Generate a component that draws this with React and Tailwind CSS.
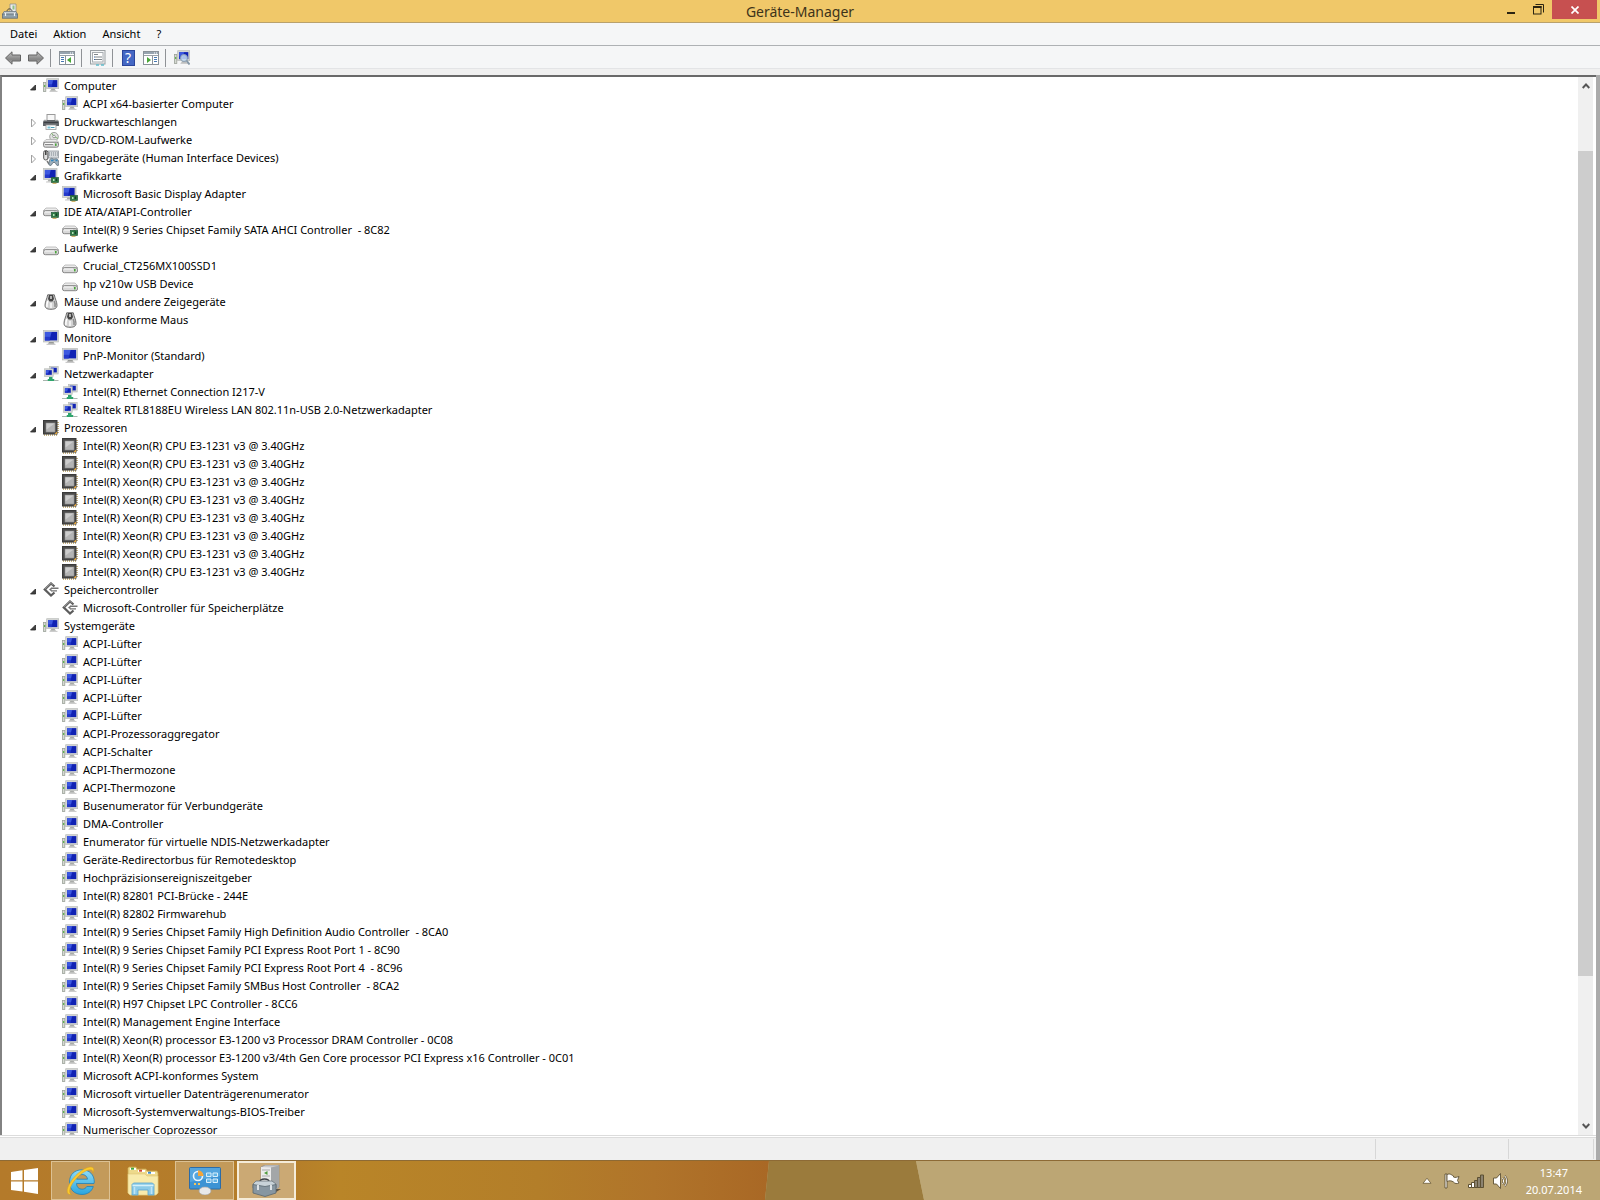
import React from "react";

const Screen = ({ x, y, w, h }) => (
  <g>
    <rect x={x} y={y} width={w} height={h} fill="#d3d5d4" stroke="#b4b7b4" strokeWidth="0.6" />
    <rect x={x + 1.4} y={y + 1.4} width={w - 2.8} height={h - 3} fill="#1022b4" />
    <path d={`M${x + 1.4} ${y + 1.4}h${(w - 2.8) * 0.55}l-${w * 0.15} ${h - 3}h-${(w - 2.8) * 0.55 - w * 0.15}z`} fill="#3c58e0" />
    <path d={`M${x + 1.4} ${y + h * 0.55}h${w * 0.35}v${h * 0.45 - 1.6}h-${w * 0.35}z`} fill="#1a2cc0" opacity="0.7" />
  </g>
);

const Board = ({ x, y }) => (
  <g>
    <rect x={x} y={y} width="7" height="5" fill="#2f7b45" stroke="#23593a" strokeWidth="0.7" />
    <rect x={x + 1.5} y={y + 1.5} width="1.5" height="2" fill="#b6dfb8" />
    <rect x={x + 4.2} y={y + 1} width="1.4" height="2.5" fill="#173d29" />
    <path d={`M${x + 1} ${y + 5.8}h4`} stroke="#c6a34a" />
  </g>
);

const Drive = ({ y = 6 }) => (
  <g>
    <path d={`M3 ${y - 1}h10l3 3H0z`} fill="#ececec" stroke="#aaa" strokeWidth="0.7" />
    <rect x="0.5" y={y + 1.7} width="15" height="5" rx="1.8" fill="#d9d9d9" stroke="#858585" />
    <path d={`M2 ${y + 3}h9`} stroke="#fafafa" />
    <rect x="12" y={y + 3} width="1.6" height="2.4" fill="#4aa53a" />
  </g>
);

const shapes = {
  system: (
    <>
      <rect x="0.5" y="4.5" width="2.3" height="9" fill="#d5d9d2" stroke="#9ba198" strokeWidth="0.8" />
      <rect x="1" y="7" width="1.3" height="2" fill="#63b252" />
      <Screen x={3.7} y={0.7} w={12} h={10} />
      <path d="M8.5 10.8h3l1.5 2h-6z" fill="#a9aba9" />
      <path d="M6.5 13.4h8" stroke="#c7c7c7" />
    </>
  ),
  printer: (
    <>
      <rect x="4" y="0.5" width="8" height="6" fill="#f7f7f7" stroke="#9a9a9a" />
      <path d="M1 6h14l1 2v4H0V8z" fill="#62656a" />
      <path d="M1 5.8h3v1H1zM12 5.8h3v1h-3z" fill="#b0b0b0" />
      <path d="M1 8.5h14" stroke="#3c3f43" />
      <rect x="3" y="11" width="10" height="4.5" fill="#fff" stroke="#999" strokeWidth="0.8" />
      <path d="M4.5 12.5h3v2h-3z" fill="#7cc5d8" />
      <path d="M8 13.5h3.5" stroke="#4a9db8" />
    </>
  ),
  dvd: (
    <>
      <circle cx="11" cy="4.7" r="4.3" fill="#e2e4e2" stroke="#8d8f8d" strokeWidth="0.8" />
      <path d="M11 4.5L8.5 1M11 4.5l4 2" stroke="#7fb66e" />
      <circle cx="11" cy="4.5" r="1.3" fill="#fff" stroke="#777" strokeWidth="0.7" />
      <Drive y={8.5} />
      <path d="M2 12.5h8" stroke="#8a8a8a" />
    </>
  ),
  hid: (
    <>
      <rect x="5" y="1" width="10.5" height="7" fill="#d5d9dc" stroke="#9399a0" strokeWidth="0.8" />
      <path d="M6 3h9M6 5h9" stroke="#7f868f" strokeDasharray="1 1" />
      <rect x="0.7" y="0.5" width="4.2" height="9.5" rx="2" fill="#e1e1e1" stroke="#555" />
      <path d="M2.8 1v4" stroke="#333" strokeWidth="1.4" />
      <path d="M4 11l2 3" stroke="#777" strokeWidth="1.4" />
      <path d="M6 15c0-6 2-8 4-6h2c3-1 4 2 4 6l-2 .5-2-3h-2l-2 3z" fill="#9eb0bd" stroke="#5e6e7a" strokeWidth="0.8" />
      <path d="M8 10.5h2.5M12.5 10.5h2" stroke="#2f84bd" strokeWidth="1.6" />
    </>
  ),
  display: (
    <>
      <Screen x={0.5} y={0.5} w={13.5} h={11} />
      <path d="M5.5 11.5h4l1 2h-6z" fill="#a9aba9" />
      <path d="M3 14h8" stroke="#c7c7c7" />
      <Board x={8.5} y={9.5} />
    </>
  ),
  ide: (
    <>
      <Drive y={5} />
      <Board x={8.5} y={8.5} />
    </>
  ),
  drive: <Drive y={8} />,
  mouse: (
    <>
      <path d="M4.700 .800h6.600c.700 4 2.700 7 2.700 10.500 0 2.500-1.500 4-6 4s-6-1.500-6-4C2 7.800 4 4.800 4.700.800z" fill="#d2d2d2" stroke="#5f5f5f" strokeWidth="0.900" />
      <path d="M4.800 7c-1 2.500-1.500 4-.800 6" stroke="#fff" strokeWidth="1.600" fill="none" />
      <path d="M11.200 7c1 2.500 1.500 4 .800 6" stroke="#8c8c8c" strokeWidth="1.600" fill="none" />
      <path d="M6 1h4l1 4-1.500 2.500h-3L5 5z" fill="#454545" />
      <path d="M8 2v3" stroke="#f2f2f2" strokeWidth="1.300" />
      <path d="M8 9v5" stroke="#f0f0f0" strokeWidth="2" />
    </>
  ),
  monitor: (
    <>
      <Screen x={0.5} y={0.5} w={15} h={11.5} />
      <path d="M6 12h4.500l1 1.800H5z" fill="#989a98" />
      <path d="M3.500 14.300h9" stroke="#bdbdbd" />
    </>
  ),
  network: (
    <>
      <Screen x={6.5} y={0.4} w={8.7} h={7.6} />
      <Screen x={1.5} y={2.8} w={8.7} h={7.6} />
      <path d="M6 11h3.500v2H11l1 2H4l1-2h1z" fill="#2fa56d" />
      <path d="M0 14.500h4.500M11 14.500h4.500" stroke="#a9b5ae" />
    </>
  ),
  cpu: (
    <>
      <path d="M1 15h13M15 2v12" stroke="#b59a5a" strokeWidth="1.600" strokeDasharray="1 1" />
      <rect x="0.500" y="0.500" width="13.500" height="13.500" fill="#4b4b4b" stroke="#3a3a3a" />
      <rect x="3" y="3" width="9" height="9" fill="#b4b4b4" stroke="#8f8f8f" strokeWidth="0.600" />
      <path d="M3.500 3.500h8l-8 6z" fill="#cdcdcd" />
      <path d="M11.500 14h2.500v-2.500z" fill="#e5a53c" />
    </>
  ),
  storage: (
    <>
      <path d="M11.500 4.500L8 1.500 1.800 7.500 8 13.500l3.500-3" fill="none" stroke="#5c5c5c" strokeWidth="2.300" />
      <path d="M2 7L8 1.200l2 2" fill="none" stroke="#9a9a9a" strokeWidth="0.900" />
      <path d="M8 6.300h7.500M8 8.900h6" stroke="#747474" strokeWidth="1.400" />
      <path d="M6 7.600l2.500-2v4z" fill="#747474" />
    </>
  ),
};

const Icon = ({ name }) => (
  <svg viewBox="0 0 16 16" className="h-4 w-4 shrink-0" aria-hidden="true">
    {shapes[name]}
  </svg>
);

const cpu = "Intel(R) Xeon(R) CPU E3-1231 v3 @ 3.40GHz";

const tree = [
  { icon: "system", label: "Computer", items: ["ACPI x64-basierter Computer"] },
  { icon: "printer", label: "Druckwarteschlangen" },
  { icon: "dvd", label: "DVD/CD-ROM-Laufwerke" },
  { icon: "hid", label: "Eingabegeräte (Human Interface Devices)" },
  { icon: "display", label: "Grafikkarte", items: ["Microsoft Basic Display Adapter"] },
  { icon: "ide", label: "IDE ATA/ATAPI-Controller", items: ["Intel(R) 9 Series Chipset Family SATA AHCI Controller  - 8C82"] },
  { icon: "drive", label: "Laufwerke", items: ["Crucial_CT256MX100SSD1", "hp v210w USB Device"] },
  { icon: "mouse", label: "Mäuse und andere Zeigegeräte", items: ["HID-konforme Maus"] },
  { icon: "monitor", label: "Monitore", items: ["PnP-Monitor (Standard)"] },
  {
    icon: "network",
    label: "Netzwerkadapter",
    items: ["Intel(R) Ethernet Connection I217-V", "Realtek RTL8188EU Wireless LAN 802.11n-USB 2.0-Netzwerkadapter"],
  },
  { icon: "cpu", label: "Prozessoren", items: [cpu, cpu, cpu, cpu, cpu, cpu, cpu, cpu] },
  { icon: "storage", label: "Speichercontroller", items: ["Microsoft-Controller für Speicherplätze"] },
  {
    icon: "system",
    label: "Systemgeräte",
    items: [
      "ACPI-Lüfter",
      "ACPI-Lüfter",
      "ACPI-Lüfter",
      "ACPI-Lüfter",
      "ACPI-Lüfter",
      "ACPI-Prozessoraggregator",
      "ACPI-Schalter",
      "ACPI-Thermozone",
      "ACPI-Thermozone",
      "Busenumerator für Verbundgeräte",
      "DMA-Controller",
      "Enumerator für virtuelle NDIS-Netzwerkadapter",
      "Geräte-Redirectorbus für Remotedesktop",
      "Hochpräzisionsereigniszeitgeber",
      "Intel(R) 82801 PCI-Brücke - 244E",
      "Intel(R) 82802 Firmwarehub",
      "Intel(R) 9 Series Chipset Family High Definition Audio Controller  - 8CA0",
      "Intel(R) 9 Series Chipset Family PCI Express Root Port 1 - 8C90",
      "Intel(R) 9 Series Chipset Family PCI Express Root Port 4  - 8C96",
      "Intel(R) 9 Series Chipset Family SMBus Host Controller  - 8CA2",
      "Intel(R) H97 Chipset LPC Controller - 8CC6",
      "Intel(R) Management Engine Interface",
      "Intel(R) Xeon(R) processor E3-1200 v3 Processor DRAM Controller - 0C08",
      "Intel(R) Xeon(R) processor E3-1200 v3/4th Gen Core processor PCI Express x16 Controller - 0C01",
      "Microsoft ACPI-konformes System",
      "Microsoft virtueller Datenträgerenumerator",
      "Microsoft-Systemverwaltungs-BIOS-Treiber",
      "Numerischer Coprozessor",
    ],
  },
];

const Category = ({ icon, label, items }) => (
  <li>
    <div className="flex h-[18px] items-center pl-7">
      <button type="button" aria-label={label} aria-expanded={Boolean(items)} className="mr-1 flex h-3 w-[9px] items-center">
        <svg viewBox="0 0 9 12" className="h-3 w-[9px]">
          {items ? (
            <path d="M.500 10L5.500 5v5z" fill="#404040" stroke="#262626" strokeWidth="0.800" />
          ) : (
            <path d="M1.500 3v8L5.500 7z" fill="#fff" stroke="#a0a0a0" />
          )}
        </svg>
      </button>
      <Icon name={icon} />
      <span className="ml-[5px] whitespace-pre">{label}</span>
    </div>
    {items && (
      <ul>
        {items.map((item, i) => (
          <li key={i} className="flex h-[18px] items-center pl-[60px]">
            <Icon name={icon} />
            <span className="ml-[5px] whitespace-pre">{item}</span>
          </li>
        ))}
      </ul>
    )}
  </li>
);

const Arrow = ({ flip }) => (
  <svg viewBox="0 0 16 14" className="h-[14px] w-4">
    <defs>
      <linearGradient id="arrowFill" x1="0" y1="0" x2="0" y2="1">
        <stop offset="0" stopColor="#c4c4c4" />
        <stop offset="0.600" stopColor="#858585" />
        <stop offset="1" stopColor="#b5b5b5" />
      </linearGradient>
    </defs>
    <path
      d={flip ? "M15.500 7L9 .800V4H.500v6H9v3.200z" : "M.500 7L7 .800V4h8.500v6H7v3.200z"}
      fill="url(#arrowFill)"
      stroke="#636363"
    />
  </svg>
);

const PanelIcon = ({ right }) => (
  <svg viewBox="0 0 16 14" className="h-[14px] w-4">
    <rect x="0.500" y="0.500" width="15" height="13" fill="#fff" stroke="#8a9299" />
    <path d="M1 2h14" stroke="#97a4b0" strokeWidth="2" />
    <path d="M11 2h1M13 2h1" stroke="#fff" />
    <path d="M1 4.500h14" stroke="#9aa1a8" />
    {right ? (
      <>
        <path d="M9.500 5v8.500" stroke="#8a9299" />
        <path d="M11 6.500h3M11 8.500h3M11 10.500h3" stroke="#4779b3" />
        <path d="M4 6v6l4-3z" fill="#48a637" />
      </>
    ) : (
      <>
        <path d="M6.500 5v8.500" stroke="#8a9299" />
        <path d="M2 6.500h3M2 8.500h3M2 10.500h3" stroke="#4779b3" />
        <path d="M12 6v6L8 9z" fill="#48a637" />
      </>
    )}
  </svg>
);

const Divider = () => <span className="h-[18px] w-px bg-[#8f9296]" />;

const ToolButton = ({ label, children }) => (
  <button type="button" aria-label={label} className="flex h-5 w-4 items-center justify-center">
    {children}
  </button>
);

const TitleBar = () => (
  <header className="flex h-[23px] items-start border-b border-[#b9a16c] bg-[#f0c869]">
    <div className="flex w-[160px] pt-[3px] pl-0.5">
      <svg viewBox="0 0 16 16" className="h-4 w-4">
        <path d="M8 1h6v10H8z" fill="#ececec" stroke="#8d8f8a" strokeWidth="0.800" />
        <path d="M10.500 2.500h2v4h-2z" fill="#8fc084" />
        <path d="M5 8.500C5 5 10 5 10 8.500" fill="none" stroke="#444" />
        <path d="M2 8.500h12l1.500 3H.500z" fill="#c4cdd3" stroke="#6d7880" strokeWidth="0.800" />
        <rect x="0.500" y="11" width="15" height="4.200" fill="#8fa0ab" stroke="#5f6c75" strokeWidth="0.800" />
        <path d="M3.500 10v3M12.500 10v3" stroke="#eef2f4" strokeWidth="1.200" />
      </svg>
    </div>
    <h1 className="flex-1 text-center text-[14px] leading-[23px] text-[#3d331a]">Geräte-Manager</h1>
    <div className="flex w-[160px] justify-end pr-[3px]">
      <button type="button" aria-label="Minimieren" className="flex h-[19px] w-7 items-center justify-center">
        <svg viewBox="0 0 10 10" className="h-2.5 w-2.5">
          <path d="M1 8h8" stroke="#2b2412" strokeWidth="2" />
        </svg>
      </button>
      <button type="button" aria-label="Verkleinern" className="mr-px flex h-[19px] w-[26px] items-center justify-center">
        <svg viewBox="0 0 11 11" className="h-[11px] w-[11px]">
          <path d="M2.500 .500h8v8" fill="none" stroke="#2b2412" />
          <rect x="0.500" y="2.500" width="7.500" height="7.500" fill="none" stroke="#2b2412" />
          <path d="M0 3h8.500" stroke="#2b2412" strokeWidth="2" />
        </svg>
      </button>
      <button type="button" aria-label="Schließen" className="flex h-[19px] w-[45px] items-center justify-center bg-[#c75050]">
        <svg viewBox="0 0 8 8" className="h-2 w-2">
          <path d="M.500 .500l7 7M7.500 .500l-7 7" stroke="#fff" strokeWidth="1.700" />
        </svg>
      </button>
    </div>
  </header>
);

const MenuBar = () => (
  <nav className="flex h-[23px] items-center gap-4 border-b border-[#aeb1b4] bg-[#f5f6f7] pl-2.5">
    {["Datei", "Aktion", "Ansicht", "?"].map((m) => (
      <button key={m} type="button">
        {m}
      </button>
    ))}
  </nav>
);

const ToolBar = () => (
  <div className="flex h-[23px] items-center border-b border-[#e3e4e6] bg-[#f5f6f7] pt-0.5 pl-[5px]">
    <div className="flex gap-[7px]">
      <ToolButton label="Zurück"><Arrow /></ToolButton>
      <ToolButton label="Vorwärts"><Arrow flip /></ToolButton>
    </div>
    <div className="ml-1.5 flex items-center gap-2">
      <Divider />
      <ToolButton label="Konsolenstruktur"><PanelIcon /></ToolButton>
    </div>
    <div className="ml-1.5 flex items-center gap-2">
      <Divider />
      <ToolButton label="Eigenschaften">
        <svg viewBox="0 0 16 16" className="h-4 w-4">
          <rect x="0.500" y="0.500" width="14.500" height="13.500" fill="#f3f5f6" stroke="#9a9fa3" />
          <rect x="2.500" y="2.500" width="10.500" height="9.500" fill="#fff" stroke="#a7acb0" />
          <path d="M4 4.500h4M5 7h7M5 9.500h7" stroke="#7f868c" />
          <path d="M4 7h1M4 9.500h1" stroke="#3465a4" />
          <path d="M6 15h3M11 15h3" stroke="#5fbccb" strokeWidth="1.500" />
        </svg>
      </ToolButton>
    </div>
    <div className="ml-1.5 flex items-center gap-[7px]">
      <Divider />
      <ToolButton label="Hilfe">
        <span className="flex h-4 w-[13px] items-center justify-center border border-[#2b459b] bg-[#4467c4] text-[14px] leading-4 text-white">?</span>
      </ToolButton>
      <ToolButton label="Aktionsbereich"><PanelIcon right /></ToolButton>
    </div>
    <div className="ml-1.5 flex items-center gap-2">
      <Divider />
      <ToolButton label="Nach geänderter Hardware suchen">
        <svg viewBox="0 0 16 16" className="h-4 w-4">
          {shapes.system}
          <circle cx="10" cy="8" r="3.500" fill="#c5ddf3" fillOpacity="0.850" stroke="#8b9fb3" />
          <path d="M12.500 10.500l3 4" stroke="#8698a8" strokeWidth="2" />
        </svg>
      </ToolButton>
    </div>
  </div>
);

const ScrollBar = () => (
  <div className="flex w-[15px] shrink-0 flex-col bg-[#f0f0f0]">
    <button type="button" aria-label="Nach oben" className="flex h-[18px] items-center justify-center">
      <svg viewBox="0 0 8 6" className="h-1.5 w-2">
        <path d="M.700 5L4 1.500 7.300 5" fill="none" stroke="#555" strokeWidth="1.900" />
      </svg>
    </button>
    <div className="grow-[56]" />
    <div className="grow-[825] bg-[#cdcdcd]" />
    <div className="grow-[141]" />
    <button type="button" aria-label="Nach unten" className="flex h-[18px] items-center justify-center">
      <svg viewBox="0 0 8 6" className="h-1.5 w-2">
        <path d="M.700 1L4 4.500 7.300 1" fill="none" stroke="#555" strokeWidth="1.900" />
      </svg>
    </button>
  </div>
);

const StatusBar = () => (
  <footer className="flex h-[22px] shrink-0 bg-[#f0f0f0] py-px pr-0.5">
    <div className="flex-1 border-r border-[#d7d7d7]" />
    <div className="w-[133px] border-r border-[#d7d7d7]" />
    <div className="w-[85px] border-r border-[#d7d7d7]" />
  </footer>
);

const TaskButton = ({ label, active, children }) => (
  <button
    type="button"
    aria-label={label}
    className={
      active
        ? "flex h-[39px] w-[59px] items-center justify-center border-2 border-[#f5ecd9] bg-[#cba974]"
        : "flex h-[39px] w-[59px] items-center justify-center border border-[#dcc193] bg-[#c39a5a]"
    }
  >
    {children}
  </button>
);

const TaskBar = () => (
  <div className="relative flex h-10 shrink-0 items-stretch border-t border-[#8d6a35] bg-[#bca674]">
    <svg viewBox="0 0 1600 39" preserveAspectRatio="none" className="absolute inset-0 h-full w-full" aria-hidden="true">
      <defs>
        <linearGradient id="wall" x1="0" x2="1">
          <stop offset="0" stopColor="#b47a2a" />
          <stop offset="0.380" stopColor="#b57e2a" />
          <stop offset="0.440" stopColor="#b98528" />
          <stop offset="0.700" stopColor="#b37e29" />
          <stop offset="0.850" stopColor="#b0742a" />
          <stop offset="1" stopColor="#a96825" />
        </linearGradient>
      </defs>
      <path d="M0 0h769l-4 39H0z" fill="url(#wall)" />
      <path d="M769 0h147l8 39H765z" fill="#9b7b3c" />
      <path d="M916 0h684v39H924z" fill="#bca674" />
    </svg>
    <div className="relative flex">
      <button type="button" aria-label="Start" className="flex w-[51px] items-center pl-[11px]">
        <svg viewBox="0 0 27 26" className="h-[26px] w-[27px]">
          <path d="M0 4l11.500-1.800V12.300H0zM13 2l14-2v12.300H13zM0 13.600h11.500v10L0 22zM13 13.600h14V26l-14-2.200z" fill="#fff" />
        </svg>
      </button>
      <TaskButton label="Internet Explorer">
        <svg viewBox="0 0 30 30" className="h-[30px] w-[30px]">
          <defs>
            <linearGradient id="ie" x1="0" y1="0" x2="0" y2="1">
              <stop offset="0" stopColor="#8fdcf8" />
              <stop offset="1" stopColor="#2aa5de" />
            </linearGradient>
          </defs>
          <path
            d="M28 17.500H10.500c0 3.500 2.300 5.700 5.500 5.700 2.300 0 3.900-1 4.800-2.700h6.500C25.800 25.500 21.500 28.500 16 28.500 8.500 28.500 3.500 23.500 3.500 16S8.700 3.800 16 3.800c7.500 0 12.300 5 12.300 12.200zM21.500 13.200c-.300-2.900-2.500-4.700-5.500-4.700s-5 1.800-5.400 4.700z"
            fill="url(#ie)"
            stroke="#1f82ba"
            strokeWidth="0.800"
          />
          <path d="M5.500 28.500C-1 29.500 0 21 7.500 12 14 4.200 23.500-.800 26.800 1.500c1.300 1 1.200 3.300.200 5.500.200-3.500-2.500-4-6.500-2.300C14 7.500 5.500 16.500 4 23c-.700 2.800-.300 4.500 1.500 5.500z" fill="#fbc92e" stroke="#d79f1b" strokeWidth="0.500" />
        </svg>
      </TaskButton>
      <button type="button" aria-label="Explorer" className="flex w-[65px] items-center justify-center">
        <svg viewBox="0 0 32 30" className="h-[30px] w-8">
          <path d="M1 2l1-1h7l1 2h9l1 2h10l1 2v20l-2 2H3l-2-2z" fill="#edd98b" stroke="#caa64f" strokeWidth="0.800" />
          <path d="M3 3h6M11 5h7M20 7h8" stroke="#fff" strokeWidth="2" />
          <path d="M4 2.700h3" stroke="#42a83f" strokeWidth="2" />
          <path d="M12 4.700h3" stroke="#cf4a34" strokeWidth="2" />
          <path d="M21 6.700h3" stroke="#3c8ccc" strokeWidth="2" />
          <path d="M1 8h17l2 2h11v17l-2 2H3l-2-2z" fill="#f8ebac" stroke="#dfc577" strokeWidth="0.600" />
          <path d="M5 29V18.500l1.500-1.500h19l1.500 1.500V29h-6v-5h-10v5z" fill="#8ccbe8" stroke="#5aa2cc" strokeWidth="0.800" />
          <path d="M5.500 19.500h21" stroke="#d5f0fb" strokeWidth="1.500" />
          <path d="M7.500 21v7M24.500 21v7" stroke="#bfe4f5" strokeWidth="1.500" />
        </svg>
      </button>
      <TaskButton label="Systemsteuerung">
        <svg viewBox="0 0 32 28" className="h-7 w-8">
          <rect x="0.500" y="0.500" width="31" height="21.500" rx="1" fill="#3c93d4" stroke="#2b6ca8" />
          <path d="M1 1h30v8L1 15z" fill="#64b0e4" opacity="0.600" />
          <circle cx="9" cy="9" r="4.500" fill="none" stroke="#e8f5fd" strokeWidth="1.600" />
          <path d="M9 9V3.200A5.500 5.500 0 0 1 14.500 9z" fill="#f3a53a" />
          <path d="M17.500 6h4.500v3.500h-4.500zM24 6h4.500v3.500H24zM17.500 12h4.500v3.500h-4.500zM24 12h4.500v3.500H24z" fill="#62b4e6" stroke="#d8eefb" />
          <path d="M5 17h2M9 17h2" stroke="#f3c45c" strokeWidth="2" />
          <path d="M13 20h6v3h-6z" fill="#bfc5ca" />
          <ellipse cx="16" cy="24" rx="6" ry="4" fill="#e8e8e8" stroke="#a5a5a5" strokeWidth="0.700" />
        </svg>
      </TaskButton>
      <div className="ml-[3px] flex">
        <TaskButton label="Geräte-Manager" active>
          <svg viewBox="0 0 30 32" className="h-8 w-[30px]">
            <path d="M9 2l4-2h14v22l-5 4H9z" fill="#c9cacb" stroke="#8b8c8e" strokeWidth="0.700" />
            <path d="M9 2l10 .500V26H9z" fill="#ebebeb" />
            <path d="M19 2.500L27 .500V22l-8 5z" fill="#a3a6a8" />
            <path d="M10 5h8M10 11h8" stroke="#a9abac" />
            <path d="M12 8l3.500-2v4z" fill="#4f9b3d" />
            <path d="M24 24h5l-5 3z" fill="#5c5142" />
            <path d="M8 17c0-4 9-4 9 0" fill="none" stroke="#3d4247" strokeWidth="1.500" />
            <path d="M1 19l3-3h16l4 3v4H1z" fill="#c9d3d9" stroke="#6a757c" strokeWidth="0.800" />
            <path d="M1 19.500l12 2 11-2V28l-11 3.500L1 28z" fill="#8796a1" stroke="#596770" strokeWidth="0.800" />
            <path d="M6 20v5M19 20v5" stroke="#e7ecef" strokeWidth="1.800" />
          </svg>
        </TaskButton>
      </div>
    </div>
    <div className="relative ml-auto flex items-center">
      <button type="button" aria-label="Ausgeblendete Symbole einblenden" className="mr-3 flex">
        <svg viewBox="0 0 10 8" className="h-2 w-2.5">
          <path d="M5 1.200L1 6.300h8z" fill="#fff" stroke="#6b5a36" strokeWidth="0.800" />
        </svg>
      </button>
      <div className="flex items-center gap-2">
        <svg viewBox="0 0 16 18" className="h-[18px] w-4">
          <path d="M1 2h2v14H1z" fill="#fff" stroke="#5d5033" strokeWidth="0.900" />
          <path d="M3 2.500c3-1.500 4.500.500 6.500 1.500v1c2 1 3.500 0 5.500-.500l-1.500 4L15 11c-2 .800-4 1-5.500-1C7.500 8.500 5 8.500 3 9.500z" fill="#fff" stroke="#5d5033" strokeWidth="0.900" />
        </svg>
        <svg viewBox="0 0 16 14" className="h-[14px] w-4">
          <path d="M.500 10.500h3v3h-3zM3.500 8.500h3v5h-3z" fill="#fff" stroke="#5d5033" />
          <path d="M6.500 6.500h3v7h-3zM9.500 3.500h3v10h-3zM12.500 1h3v12.500h-3z" fill="#8b8270" stroke="#5d5033" />
        </svg>
        <svg viewBox="0 0 18 18" className="h-[18px] w-[18px]">
          <path d="M1.500 6h3l4-4.500v15l-4-4.500h-3z" fill="#fff" stroke="#5d5033" strokeWidth="0.900" />
          <path d="M10.500 6c1.500 2 1.500 4 0 6M12.800 4c2.500 3 2.500 7 0 10" fill="none" stroke="#5d5033" strokeWidth="2" />
          <path d="M10.500 6c1.500 2 1.500 4 0 6M12.800 4c2.500 3 2.500 7 0 10" fill="none" stroke="#fff" />
        </svg>
      </div>
      <div className="mr-[18px] ml-4 text-center text-[11px] leading-[17px] text-white">
        <div>13:47</div>
        <div>20.07.2014</div>
      </div>
    </div>
  </div>
);

export default function App() {
  return (
    <div className="flex h-screen flex-col overflow-hidden bg-[#f0f0f0] font-['Noto_Sans','Open_Sans',sans-serif] text-[11px] leading-4 text-black">
      <TitleBar />
      <MenuBar />
      <ToolBar />
      <main className="mt-1.5 flex min-h-0 flex-1 flex-col border-r-4 border-[#ababab]">
        <div className="flex min-h-0 flex-1 border-t-2 border-l-2 border-t-[#696969] border-l-[#828282] bg-white pr-[3px]">
          <ul className="min-w-0 flex-1 overflow-hidden">
            {tree.map((c) => (
              <Category key={c.label} {...c} />
            ))}
          </ul>
          <ScrollBar />
        </div>
        <div className="h-[3px] shrink-0 border-y border-[#dcdcdc] bg-white" />
        <StatusBar />
      </main>
      <TaskBar />
    </div>
  );
}
